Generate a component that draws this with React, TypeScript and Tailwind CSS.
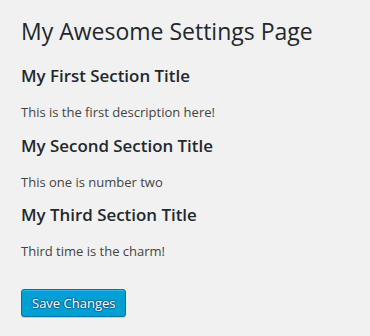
export default function App() {
  const font = { fontFamily: '"Open Sans", "Noto Sans", sans-serif' };
  return (
    <div className="w-[370px] h-[336px] bg-[#f1f1f1] overflow-hidden" style={font}>
      <div className="flex flex-col items-start pl-[21px] pt-[17px]">
        <h1 className="text-[23px] leading-[29px] font-normal text-[#23282d]">My Awesome Settings Page</h1>
        <h2 className="mt-[19px] text-[16.9px] leading-[22px] font-semibold text-[#23282d]">My First Section Title</h2>
        <p className="mt-[15px] text-[13px] leading-[20px] text-[#444]">This is the first description here!</p>
        <h2 className="mt-[13px] text-[16.9px] leading-[22px] font-semibold text-[#23282d]">My Second Section Title</h2>
        <p className="mt-[15px] text-[13px] leading-[20px] text-[#444]">This one is number two</p>
        <h2 className="mt-[12px] text-[16.9px] leading-[22px] font-semibold text-[#23282d]">My Third Section Title</h2>
        <p className="mt-[15px] text-[13px] leading-[20px] text-[#444]">Third time is the charm!</p>
        <button className="mt-[28px] h-[28px] px-[10px] pb-[1px] text-[13px] leading-[26px] bg-[#00a0d2] border border-[#0073aa] rounded-[3px] text-white shadow-[inset_0_1px_0_rgba(120,200,230,0.5),0_1px_0_rgba(0,0,0,0.15)] [text-shadow:0_-1px_1px_#006799,1px_0_1px_#006799,0_1px_1px_#006799,-1px_0_1px_#006799]">
          Save Changes
        </button>
      </div>
    </div>
  );
}
